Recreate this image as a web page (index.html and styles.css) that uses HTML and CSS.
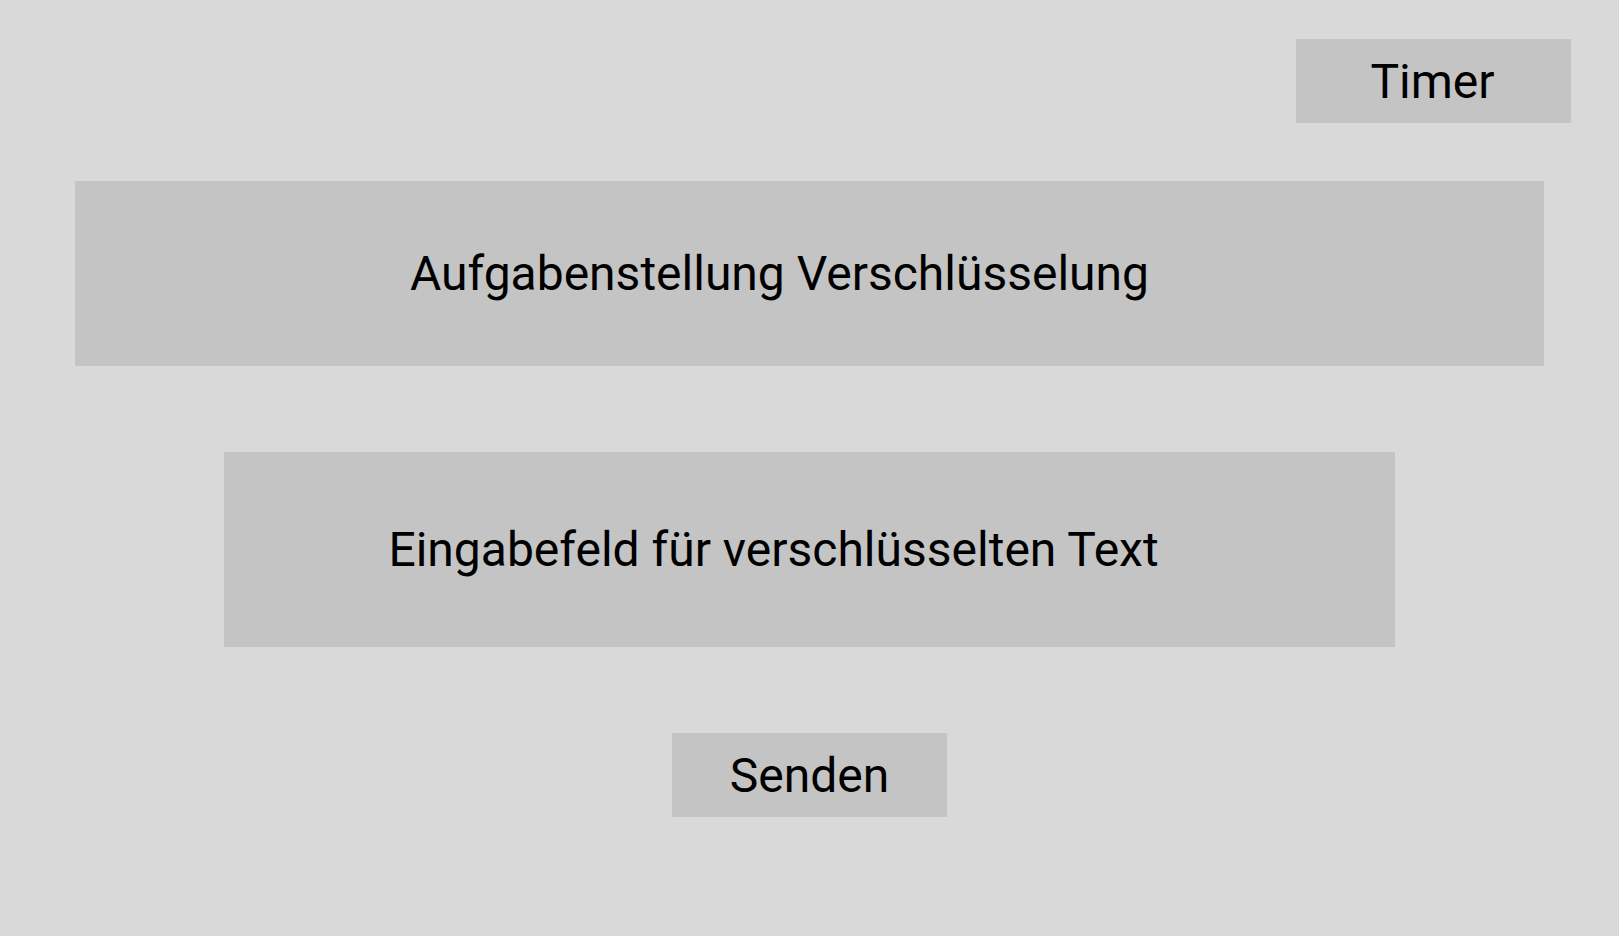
FILE: index.html
```html
<!DOCTYPE html>
<html lang="de">
<head>
<meta charset="utf-8">
<title>Verschlüsselung</title>
<link rel="stylesheet" href="styles.css">
</head>
<body>
<div class="page">
  <div class="top-row">
    <div class="timer">Timer</div>
  </div>
  <div class="task">Aufgabenstellung Verschlüsselung</div>
  <div class="input">Eingabefeld für verschlüsselten Text</div>
  <div class="send">Senden</div>
</div>
</body>
</html>
```
FILE: styles.css
```css
html, body {
  margin: 0;
  padding: 0;
  background: #d9d9d9;
}
.page {
  width: 1619px;
  height: 936px;
  display: flex;
  flex-direction: column;
  font-family: Roboto, "Liberation Sans", sans-serif;
  color: #000;
  font-size: 48px;
}
.top-row {
  display: flex;
  justify-content: flex-end;
  padding: 39px 48px 0 0;
}
.timer, .send {
  box-sizing: border-box;
  width: 275px;
  height: 84px;
  background: #c4c4c4;
  display: flex;
  align-items: center;
  justify-content: center;
}
.timer {
  padding-right: 2px;
}
.task {
  margin: 58px 75px 0 75px;
  height: 185px;
  background: #c4c4c4;
  display: flex;
  align-items: center;
  justify-content: center;
  padding-right: 60px;
}
.input {
  margin: 86px 224px 0 224px;
  height: 195px;
  background: #c4c4c4;
  display: flex;
  align-items: center;
  justify-content: center;
  padding-right: 72px;
}
.send {
  margin: 86px auto 0 auto;
}
```
